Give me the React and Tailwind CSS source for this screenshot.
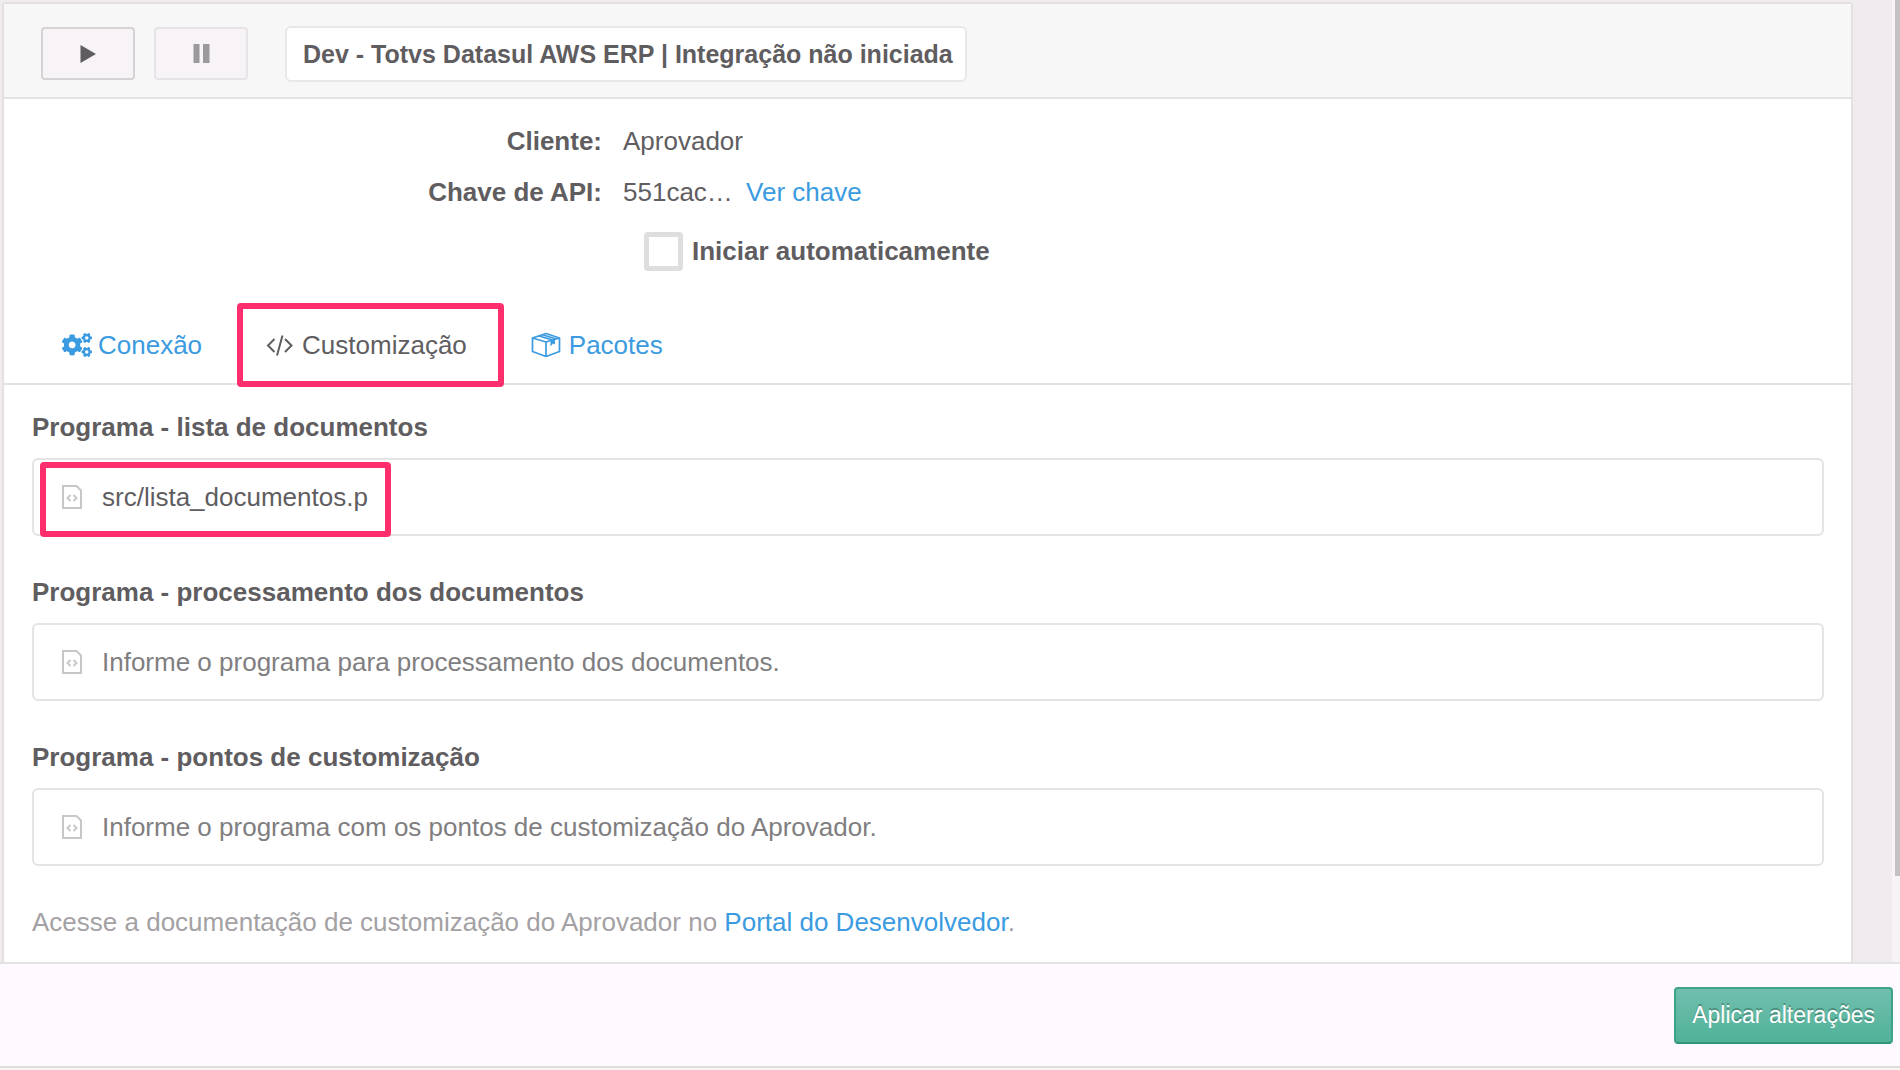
import { useState } from 'react'
import { FaCogs } from 'react-icons/fa'

const FIELDS = [
  { id: 'lista', label: 'Programa - lista de documentos', value: 'src/lista_documentos.p', placeholder: '', marked: true },
  { id: 'processamento', label: 'Programa - processamento dos documentos', value: '', placeholder: 'Informe o programa para processamento dos documentos.' },
  { id: 'pontos', label: 'Programa - pontos de customização', value: '', placeholder: 'Informe o programa com os pontos de customização do Aprovador.' },
]

function PlayIcon() {
  return (
    <svg viewBox="0 0 16 18" className="w-4 h-[18px]" fill="currentColor">
      <path d="M0.500 0L16 9L0.500 18Z" />
    </svg>
  )
}

function PauseIcon() {
  return (
    <svg viewBox="0 0 17 19" className="w-[17px] h-[19px]" fill="currentColor">
      <path d="M0.500 0H6.500V19H0.500ZM10 0H16.500V19H10Z" />
    </svg>
  )
}

function CodeIcon() {
  return (
    <svg viewBox="0 0 28 26" className="w-7 h-[26px]" fill="none" stroke="currentColor" strokeWidth="2">
      <path d="M8.500 7L2 13.500L8.500 20M19 7L25.500 13.500L19 20M16.500 3.500L11 23.500" />
    </svg>
  )
}

function BoxIcon() {
  return (
    <svg viewBox="0 0 30 26" className="w-[30px] h-[26px]" fill="none" stroke="currentColor" strokeWidth="1.700" strokeLinejoin="round">
      <path d="M1.500 6L15 10L28.500 6V19.500L15 24.500L1.500 19.500ZM1.500 6L15 1.500L28.500 6M15 10V24.500M8 4L21.500 8M11.500 2.800L25 7" />
      <path d="M19.500 8.500L24 7.200V12.500L22 11.500L19.500 14.500Z" fill="currentColor" stroke="none" />
    </svg>
  )
}

function FileIcon() {
  return (
    <svg viewBox="0 0 20 24" className="w-5 h-6 shrink-0 text-[#c9c6c9]" fill="none" stroke="currentColor" strokeWidth="2">
      <path d="M1 1H14.500L19 5.500V23H1Z" />
      <path d="M8.500 10L5.500 13L8.500 16M11.500 10L14.500 13L11.500 16" />
    </svg>
  )
}

function Field({ id, label, value, placeholder, marked }) {
  const [text, setText] = useState(value)

  return (
    <div className="mb-9">
      <label htmlFor={id} className="block h-[51px] font-bold">{label}</label>
      <div className="relative flex items-center h-[78px] border-2 border-[#e5e3e4] rounded-md pl-7">
        <FileIcon />
        <input
          id={id}
          type="text"
          value={text}
          placeholder={placeholder}
          onChange={e => setText(e.target.value)}
          className="flex-1 min-w-0 h-full pl-5 outline-none placeholder:text-[#807e80]"
        />
        {marked && <div className="absolute top-0.5 left-1.5 w-[351px] h-[75px] border-[6px] border-[#ff2f6d] rounded-sm pointer-events-none" />}
      </div>
    </div>
  )
}

export default function App() {
  const [auto, setAuto] = useState(false)

  return (
    <div className="flex flex-col h-screen overflow-hidden bg-[#efebee] text-[#5f5d5f] font-['Liberation_Sans',Arial,sans-serif] text-[26px] leading-10">
      <div className="flex flex-1 min-h-0">
        <main className="flex-1 mt-0.5 ml-0.5 border-2 border-b-0 border-[#e3e0e2] rounded-t bg-white">
          {/* Toolbar */}
          <header className="flex items-center h-[95px] pl-[37px] pt-1.5 border-b-2 border-[#e3e3e3] bg-[#f7f7f7]">
            <button aria-label="Iniciar" className="flex items-center justify-center w-[94px] h-[53px] border-2 border-[#d6d3d5] rounded bg-[#f7f3f7]">
              <PlayIcon />
            </button>
            <button aria-label="Pausar" disabled className="flex items-center justify-center w-[94px] h-[53px] ml-[19px] border-2 border-[#e6e4e6] rounded bg-[#f7f3f7] text-[#9b999b]">
              <PauseIcon />
            </button>
            <h1 className="flex items-center h-14 ml-[37px] pl-4 pr-3 border-2 border-[#e9e7e8] rounded-md bg-white text-[25px] font-bold whitespace-nowrap">
              Dev - Totvs Datasul AWS ERP | Integração não iniciada
            </h1>
          </header>

          {/* Client info */}
          <dl className="grid grid-cols-[598px_1fr] gap-x-[21px] gap-y-[11px] pt-[22px]">
            <dt className="text-right font-bold">Cliente:</dt>
            <dd>Aprovador</dd>
            <dt className="text-right font-bold">Chave de API:</dt>
            <dd>551cac… <a href="#chave" className="ml-1.5 text-[#3b9be0]">Ver chave</a></dd>
          </dl>
          <label className="flex items-center gap-[9px] w-fit mt-[19px] ml-[640px] font-bold">
            <input
              type="checkbox"
              checked={auto}
              onChange={e => setAuto(e.target.checked)}
              className="appearance-none w-[39px] h-[39px] border-[5px] border-[#dedede] rounded-sm bg-white checked:bg-[#3b9be0]"
            />
            Iniciar automaticamente
          </label>

          {/* Tabs */}
          <nav className="flex gap-1.5 h-[82px] mt-8 pl-[29px] border-b-2 border-[#e3e3e3] text-[#3b9be0]">
            <a href="#conexao" className="flex items-center gap-1.5 h-[84px] px-[29px]">
              <FaCogs size={30} />Conexão
            </a>
            <a href="#customizacao" className="relative flex items-center gap-2 h-[84px] px-[29px] text-[#5f5d5f]">
              <CodeIcon />Customização
              <span className="absolute top-0 left-0 w-[267px] h-[84px] border-[6px] border-[#ff2f6d] rounded-sm" />
            </a>
            <a href="#pacotes" className="flex items-center gap-2 h-[84px] px-[29px]">
              <BoxIcon />Pacotes
            </a>
          </nav>

          {/* Programs */}
          <section className="pl-7 pr-[27px] pt-[22px]">
            {FIELDS.map(f => <Field key={f.id} {...f} />)}
            <p className="text-[#a3a1a3]">
              Acesse a documentação de customização do Aprovador no <a href="#portal" className="text-[#3b9be0]">Portal do Desenvolvedor</a>.
            </p>
          </section>
        </main>
        <div className="w-[39px]" />
        <div className="flex justify-end w-2 bg-[#f7f3f7]">
          <div className="w-[5px] h-[876px] bg-[#c3c1c3]" />
        </div>
      </div>

      {/* Footer */}
      <footer className="flex items-center justify-end h-[104px] pr-[7px] border-t-2 border-[#e3e3e3] bg-[#fefaff]">
        <button className="h-[57px] px-4 border-2 border-[#3fa389] border-b-[#2f9478] rounded bg-linear-to-b from-[#70bfae] to-[#50b298] text-[23px] text-white [text-shadow:0_-2px_0_#00000040]">
          Aplicar alterações
        </button>
      </footer>
      <div className="h-1 border-t-2 border-[#dfdcda] bg-[#f7f5f5]" />
    </div>
  )
}
